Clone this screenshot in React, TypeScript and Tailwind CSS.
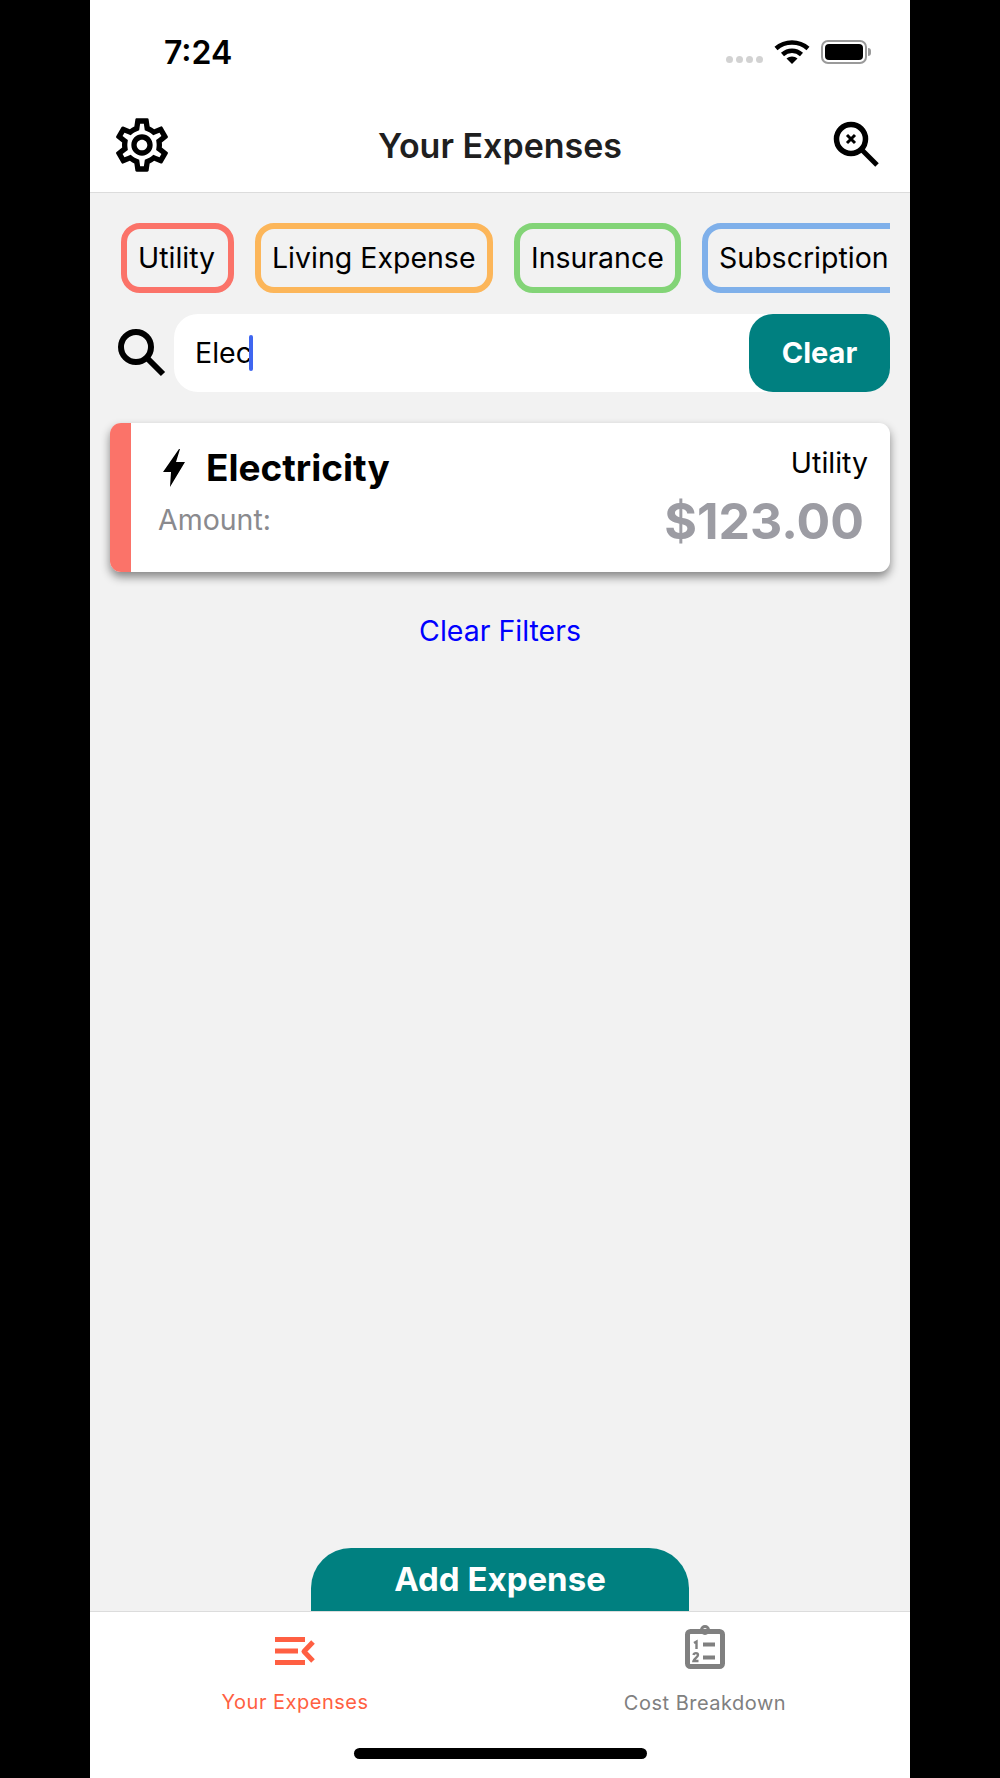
import { MdOutlineSettings } from "react-icons/md";

const categories = [
  { label: "Utility", border: "border-[#fb7369]", width: "w-[113px]" },
  { label: "Living Expense", border: "border-[#fcb65a]", width: "w-[238px]" },
  { label: "Insurance", border: "border-[#83d477]", width: "w-[167px]" },
  { label: "Subscription", border: "border-[#7fb0ea]", width: "w-[210px]" },
];

function StatusBar() {
  return (
    <div className="h-[96px] flex items-start justify-between pl-[74px] pr-[39px] pt-[35px]">
      <span className="text-[32px] leading-[36px] font-semibold text-black">7:24</span>
      <div className="flex items-center pt-[5px]">
        <div className="flex gap-[3px] mt-[15px] mr-[11px]">
          <span className="w-[7px] h-[7px] rounded-full bg-[#d2d2d2]" />
          <span className="w-[7px] h-[7px] rounded-full bg-[#d2d2d2]" />
          <span className="w-[7px] h-[7px] rounded-full bg-[#d2d2d2]" />
          <span className="w-[7px] h-[7px] rounded-full bg-[#d2d2d2]" />
        </div>
        <svg width="36" height="24" viewBox="0 0 36 24" fill="none" stroke="black" strokeWidth="4.5">
          <path d="M2 8.5C11 0.5 25 0.5 34 8.5" />
          <path d="M8.5 14.5C14 9.5 22 9.5 27.5 14.5" />
          <path d="M18 24L12.5 18.5C15.5 15.8 20.5 15.8 23.5 18.5Z" fill="black" stroke="none" />
        </svg>
        <div className="ml-[11px] w-[46px] h-[24px] rounded-[7px] border-2 border-[#9a9a9a] p-[2px]">
          <div className="w-full h-full rounded-[4px] bg-black" />
        </div>
        <div className="ml-[1px] w-[3px] h-[8px] rounded-r-full bg-[#9a9a9a]" />
      </div>
    </div>
  );
}

function NavBar() {
  return (
    <div className="h-[97px] flex items-center border-b border-[#dcdcdc]">
      <div className="w-[120px] pl-[20px]">
        <MdOutlineSettings className="w-[64px] h-[64px] text-black -mb-[2px]" />
      </div>
      <h1 className="flex-1 text-center text-[34px] leading-[44px] mt-[3px] font-semibold text-[#1f1f1f]">
        Your Expenses
      </h1>
      <div className="w-[120px] flex justify-end pr-[29px]">
        <svg width="50" height="50" viewBox="0 0 50 50" fill="none" stroke="black" strokeLinecap="butt">
          <circle cx="20" cy="20" r="14.5" strokeWidth="5.5" />
          <path d="M31 31L46 46" strokeWidth="5" />
          <path d="M16 16L24 24M24 16L16 24" strokeWidth="3" />
        </svg>
      </div>
    </div>
  );
}

function CategoryChips() {
  return (
    <div className="ml-[31px] mr-[20px] flex gap-[21px] overflow-hidden">
      {categories.map((c) => (
        <div
          key={c.label}
          className={`${c.width} h-[70px] shrink-0 flex items-center pl-[11px] rounded-[19px] border-[6px] ${c.border} text-[28.5px] text-black whitespace-nowrap`}
        >
          {c.label}
        </div>
      ))}
    </div>
  );
}

function SearchRow() {
  return (
    <div className="mt-[21px] ml-[27px] mr-[20px] flex items-center">
      <svg width="50" height="50" viewBox="0 0 50 50" fill="none" stroke="black" strokeWidth="6" className="shrink-0">
        <circle cx="19" cy="19" r="15" />
        <path d="M30 30L46 46" />
      </svg>
      <div className="ml-[7px] flex-1 h-[78px] rounded-[24px] bg-white flex items-center justify-between">
        <div className="pl-[21px] flex items-center">
          <span className="text-[28.5px] text-black">Elec</span>
          <span className="w-[4px] h-[36px] rounded-full bg-[#3f66f0] -ml-[3px]" />
        </div>
        <button className="w-[141px] h-[78px] rounded-[24px] bg-[#008080] text-white text-[29px] font-bold">
          Clear
        </button>
      </div>
    </div>
  );
}

function ExpenseCard() {
  return (
    <div className="mt-[31px] mx-[20px] h-[149px] flex rounded-[11px] bg-white overflow-hidden shadow-[0_5px_10px_rgba(0,0,0,0.45)]">
      <div className="w-[21px] bg-[#fb7369]" />
      <div className="flex-1 pl-[27px] pr-[22px] flex flex-col">
        <div className="flex justify-between items-start pt-[22px]">
          <div className="flex items-center">
            <svg width="22" height="38" viewBox="0 0 22 38" fill="black" className="ml-[5px]">
              <path d="M16 0L0 23H8L7 38L22 13H13L17 0Z" />
            </svg>
            <span className="ml-[21px] text-[37px] leading-[46px] font-bold text-black">Electricity</span>
          </div>
          <span className="text-[28.5px] leading-[40px] text-black -mt-[2px]">Utility</span>
        </div>
        <div className="flex justify-between items-start mt-[1px]">
          <span className="pt-[10px] text-[28.5px] leading-[36px] text-[#8a8a8e]">Amount:</span>
          <span className="pr-[4px] -mt-[1px] text-[50px] leading-[60px] font-bold text-[#9c9ca3]">$123.00</span>
        </div>
      </div>
    </div>
  );
}

function TabBar() {
  return (
    <div className="h-[167px] bg-white border-t border-[#dcdcdc]">
      <div className="flex">
        <div className="w-1/2 flex flex-col items-center">
          <svg width="40" height="28" viewBox="0 0 40 28" className="mt-[25px]" fill="none" stroke="#ff5f42" strokeWidth="5">
            <path d="M0 2.5H30M0 14H23M0 25.5H30" />
            <path d="M38 5L29 14.5L38 24" strokeLinejoin="round" />
          </svg>
          <span className="mt-[23px] text-[20px] leading-[28px] text-[#ff5f42] tracking-[0.5px]">Your Expenses</span>
        </div>
        <div className="w-1/2 flex flex-col items-center">
          <svg width="40" height="44" viewBox="0 0 40 44" className="mt-[13px]" fill="none" stroke="#808080">
            <rect x="2.5" y="6.5" width="35" height="35" rx="3" strokeWidth="5" />
            <circle cx="20" cy="5" r="3.5" strokeWidth="3" />
            <path d="M11 7H29" strokeWidth="4" />
            <path d="M9 18L11.5 16.5V24" strokeWidth="2.4" />
            <path d="M8.5 30C9 27.5 13 27.5 13 30C13 32 9 33.5 8.5 36H13.5" strokeWidth="2.4" />
            <path d="M18 19.5H30M18 32.5H30" strokeWidth="4" />
          </svg>
          <span className="mt-[20px] text-[20px] leading-[28px] text-[#808080] tracking-[0.5px]">Cost Breakdown</span>
        </div>
      </div>
      <div className="mt-[31px] mx-auto w-[293px] h-[11px] rounded-full bg-black" />
    </div>
  );
}

export default function App() {
  return (
    <div className="w-[1000px] h-[1778px] bg-black flex justify-center font-['Inter','Liberation_Sans',sans-serif]">
      <div className="w-[820px] h-full flex flex-col bg-white">
        <StatusBar />
        <NavBar />
        <main className="flex-1 flex flex-col bg-[#f2f2f2] pt-[30px]">
          <CategoryChips />
          <SearchRow />
          <ExpenseCard />
          <button className="mt-[41px] self-center text-[28.5px] leading-[36px] text-[#0000ff]">Clear Filters</button>
          <button className="mt-auto self-center w-[378px] h-[63px] rounded-t-[40px] bg-[#008080] text-white text-[33px] font-bold">
            Add Expense
          </button>
        </main>
        <TabBar />
      </div>
    </div>
  );
}
